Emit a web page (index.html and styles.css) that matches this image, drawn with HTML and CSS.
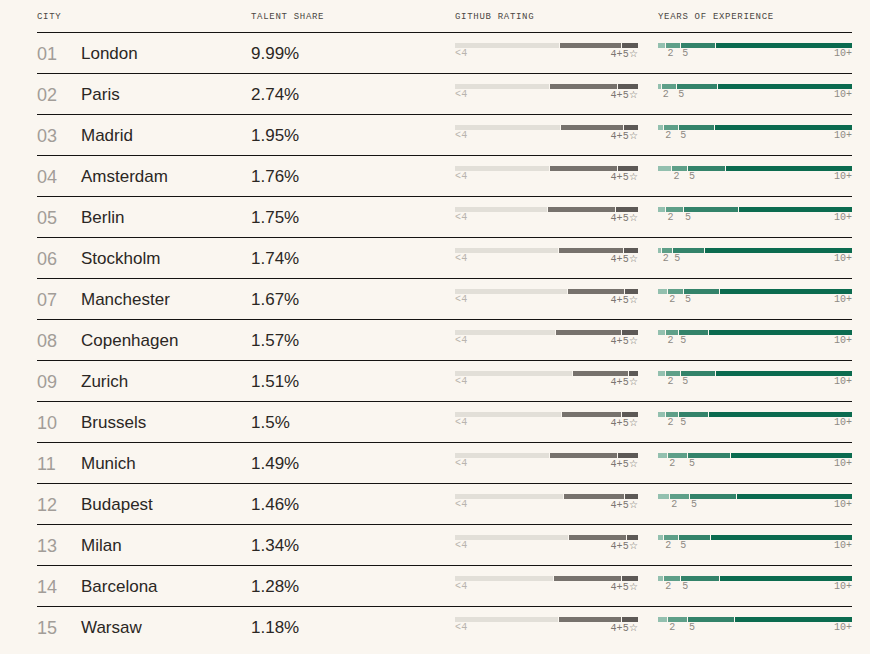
FILE: index.html
```html
<!DOCTYPE html>
<html lang="en">
<head>
<meta charset="utf-8">
<title>Talent by city</title>
<link rel="stylesheet" href="styles.css">
</head>
<body>
<div class="table">
  <div class="head">
    <div class="h-city">City</div>
    <div>Talent share</div>
    <div>Github rating</div>
    <div>Years of experience</div>
  </div>

  <div class="row">
    <div class="num">01</div><div class="name">London</div><div class="share">9.99%</div>
    <div class="gh"><div class="gbar"><span class="g1" style="flex-grow:57.7"></span><span class="g2" style="flex-grow:33.3"></span><span class="g3" style="flex-grow:9.0"></span></div><div class="glab"><span class="lo">&lt;4</span><span class="hi">4+5<span class="star">☆</span></span></div></div>
    <div class="yr"><div class="ybar"><div class="ys y1" style="flex-grow:3.9"><i></i></div><div class="ys y2" style="flex-grow:7.2"><i></i><b>2</b></div><div class="ys y3" style="flex-grow:17.5"><i></i><b>5</b></div><div class="ys y4" style="flex-grow:71.4"><i></i><b>10+</b></div></div></div>
  </div>

  <div class="row">
    <div class="num">02</div><div class="name">Paris</div><div class="share">2.74%</div>
    <div class="gh"><div class="gbar"><span class="g1" style="flex-grow:51.8"></span><span class="g2" style="flex-grow:37.0"></span><span class="g3" style="flex-grow:11.2"></span></div><div class="glab"><span class="lo">&lt;4</span><span class="hi">4+5<span class="star">☆</span></span></div></div>
    <div class="yr"><div class="ybar"><div class="ys y1" style="flex-grow:1.5"><i></i></div><div class="ys y2" style="flex-grow:7.5"><i></i><b>2</b></div><div class="ys y3" style="flex-grow:20.6"><i></i><b>5</b></div><div class="ys y4" style="flex-grow:70.4"><i></i><b>10+</b></div></div></div>
  </div>

  <div class="row">
    <div class="num">03</div><div class="name">Madrid</div><div class="share">1.95%</div>
    <div class="gh"><div class="gbar"><span class="g1" style="flex-grow:57.8"></span><span class="g2" style="flex-grow:34.3"></span><span class="g3" style="flex-grow:7.9"></span></div><div class="glab"><span class="lo">&lt;4</span><span class="hi">4+5<span class="star">☆</span></span></div></div>
    <div class="yr"><div class="ybar"><div class="ys y1" style="flex-grow:2.8"><i></i></div><div class="ys y2" style="flex-grow:7.3"><i></i><b>2</b></div><div class="ys y3" style="flex-grow:18.0"><i></i><b>5</b></div><div class="ys y4" style="flex-grow:71.9"><i></i><b>10+</b></div></div></div>
  </div>

  <div class="row">
    <div class="num">04</div><div class="name">Amsterdam</div><div class="share">1.76%</div>
    <div class="gh"><div class="gbar"><span class="g1" style="flex-grow:51.8"></span><span class="g2" style="flex-grow:37.0"></span><span class="g3" style="flex-grow:11.2"></span></div><div class="glab"><span class="lo">&lt;4</span><span class="hi">4+5<span class="star">☆</span></span></div></div>
    <div class="yr"><div class="ybar"><div class="ys y1" style="flex-grow:7.0"><i></i></div><div class="ys y2" style="flex-grow:7.7"><i></i><b>2</b></div><div class="ys y3" style="flex-grow:19.1"><i></i><b>5</b></div><div class="ys y4" style="flex-grow:66.2"><i></i><b>10+</b></div></div></div>
  </div>

  <div class="row">
    <div class="num">05</div><div class="name">Berlin</div><div class="share">1.75%</div>
    <div class="gh"><div class="gbar"><span class="g1" style="flex-grow:50.6"></span><span class="g2" style="flex-grow:37.1"></span><span class="g3" style="flex-grow:12.3"></span></div><div class="glab"><span class="lo">&lt;4</span><span class="hi">4+5<span class="star">☆</span></span></div></div>
    <div class="yr"><div class="ybar"><div class="ys y1" style="flex-grow:3.9"><i></i></div><div class="ys y2" style="flex-grow:8.7"><i></i><b>2</b></div><div class="ys y3" style="flex-grow:28.4"><i></i><b>5</b></div><div class="ys y4" style="flex-grow:59.0"><i></i><b>10+</b></div></div></div>
  </div>

  <div class="row">
    <div class="num">06</div><div class="name">Stockholm</div><div class="share">1.74%</div>
    <div class="gh"><div class="gbar"><span class="g1" style="flex-grow:56.7"></span><span class="g2" style="flex-grow:35.4"></span><span class="g3" style="flex-grow:7.9"></span></div><div class="glab"><span class="lo">&lt;4</span><span class="hi">4+5<span class="star">☆</span></span></div></div>
    <div class="yr"><div class="ybar"><div class="ys y1" style="flex-grow:1.5"><i></i></div><div class="ys y2" style="flex-grow:5.5"><i></i><b>2</b></div><div class="ys y3" style="flex-grow:15.9"><i></i><b>5</b></div><div class="ys y4" style="flex-grow:77.1"><i></i><b>10+</b></div></div></div>
  </div>

  <div class="row">
    <div class="num">07</div><div class="name">Manchester</div><div class="share">1.67%</div>
    <div class="gh"><div class="gbar"><span class="g1" style="flex-grow:61.6"></span><span class="g2" style="flex-grow:31.0"></span><span class="g3" style="flex-grow:7.4"></span></div><div class="glab"><span class="lo">&lt;4</span><span class="hi">4+5<span class="star">☆</span></span></div></div>
    <div class="yr"><div class="ybar"><div class="ys y1" style="flex-grow:4.9"><i></i></div><div class="ys y2" style="flex-grow:7.7"><i></i><b>2</b></div><div class="ys y3" style="flex-grow:18.1"><i></i><b>5</b></div><div class="ys y4" style="flex-grow:69.3"><i></i><b>10+</b></div></div></div>
  </div>

  <div class="row">
    <div class="num">08</div><div class="name">Copenhagen</div><div class="share">1.57%</div>
    <div class="gh"><div class="gbar"><span class="g1" style="flex-grow:55.0"></span><span class="g2" style="flex-grow:36.0"></span><span class="g3" style="flex-grow:9.0"></span></div><div class="glab"><span class="lo">&lt;4</span><span class="hi">4+5<span class="star">☆</span></span></div></div>
    <div class="yr"><div class="ybar"><div class="ys y1" style="flex-grow:3.9"><i></i></div><div class="ys y2" style="flex-grow:6.2"><i></i><b>2</b></div><div class="ys y3" style="flex-grow:14.9"><i></i><b>5</b></div><div class="ys y4" style="flex-grow:75.0"><i></i><b>10+</b></div></div></div>
  </div>

  <div class="row">
    <div class="num">09</div><div class="name">Zurich</div><div class="share">1.51%</div>
    <div class="gh"><div class="gbar"><span class="g1" style="flex-grow:64.9"></span><span class="g2" style="flex-grow:29.9"></span><span class="g3" style="flex-grow:5.2"></span></div><div class="glab"><span class="lo">&lt;4</span><span class="hi">4+5<span class="star">☆</span></span></div></div>
    <div class="yr"><div class="ybar"><div class="ys y1" style="flex-grow:3.9"><i></i></div><div class="ys y2" style="flex-grow:7.2"><i></i><b>2</b></div><div class="ys y3" style="flex-grow:17.5"><i></i><b>5</b></div><div class="ys y4" style="flex-grow:71.4"><i></i><b>10+</b></div></div></div>
  </div>

  <div class="row">
    <div class="num">10</div><div class="name">Brussels</div><div class="share">1.5%</div>
    <div class="gh"><div class="gbar"><span class="g1" style="flex-grow:58.8"></span><span class="g2" style="flex-grow:32.2"></span><span class="g3" style="flex-grow:9.0"></span></div><div class="glab"><span class="lo">&lt;4</span><span class="hi">4+5<span class="star">☆</span></span></div></div>
    <div class="yr"><div class="ybar"><div class="ys y1" style="flex-grow:3.9"><i></i></div><div class="ys y2" style="flex-grow:6.2"><i></i><b>2</b></div><div class="ys y3" style="flex-grow:14.9"><i></i><b>5</b></div><div class="ys y4" style="flex-grow:75.0"><i></i><b>10+</b></div></div></div>
  </div>

  <div class="row">
    <div class="num">11</div><div class="name">Munich</div><div class="share">1.49%</div>
    <div class="gh"><div class="gbar"><span class="g1" style="flex-grow:51.8"></span><span class="g2" style="flex-grow:37.0"></span><span class="g3" style="flex-grow:11.2"></span></div><div class="glab"><span class="lo">&lt;4</span><span class="hi">4+5<span class="star">☆</span></span></div></div>
    <div class="yr"><div class="ybar"><div class="ys y1" style="flex-grow:4.9"><i></i></div><div class="ys y2" style="flex-grow:9.8"><i></i><b>2</b></div><div class="ys y3" style="flex-grow:22.2"><i></i><b>5</b></div><div class="ys y4" style="flex-grow:63.1"><i></i><b>10+</b></div></div></div>
  </div>

  <div class="row">
    <div class="num">12</div><div class="name">Budapest</div><div class="share">1.46%</div>
    <div class="gh"><div class="gbar"><span class="g1" style="flex-grow:59.9"></span><span class="g2" style="flex-grow:32.7"></span><span class="g3" style="flex-grow:7.4"></span></div><div class="glab"><span class="lo">&lt;4</span><span class="hi">4+5<span class="star">☆</span></span></div></div>
    <div class="yr"><div class="ybar"><div class="ys y1" style="flex-grow:5.9"><i></i></div><div class="ys y2" style="flex-grow:9.8"><i></i><b>2</b></div><div class="ys y3" style="flex-grow:24.2"><i></i><b>5</b></div><div class="ys y4" style="flex-grow:60.1"><i></i><b>10+</b></div></div></div>
  </div>

  <div class="row">
    <div class="num">13</div><div class="name">Milan</div><div class="share">1.34%</div>
    <div class="gh"><div class="gbar"><span class="g1" style="flex-grow:62.7"></span><span class="g2" style="flex-grow:31.0"></span><span class="g3" style="flex-grow:6.3"></span></div><div class="glab"><span class="lo">&lt;4</span><span class="hi">4+5<span class="star">☆</span></span></div></div>
    <div class="yr"><div class="ybar"><div class="ys y1" style="flex-grow:2.8"><i></i></div><div class="ys y2" style="flex-grow:7.3"><i></i><b>2</b></div><div class="ys y3" style="flex-grow:15.9"><i></i><b>5</b></div><div class="ys y4" style="flex-grow:74.0"><i></i><b>10+</b></div></div></div>
  </div>

  <div class="row">
    <div class="num">14</div><div class="name">Barcelona</div><div class="share">1.28%</div>
    <div class="gh"><div class="gbar"><span class="g1" style="flex-grow:53.9"></span><span class="g2" style="flex-grow:37.1"></span><span class="g3" style="flex-grow:9.0"></span></div><div class="glab"><span class="lo">&lt;4</span><span class="hi">4+5<span class="star">☆</span></span></div></div>
    <div class="yr"><div class="ybar"><div class="ys y1" style="flex-grow:2.8"><i></i></div><div class="ys y2" style="flex-grow:8.3"><i></i><b>2</b></div><div class="ys y3" style="flex-grow:19.6"><i></i><b>5</b></div><div class="ys y4" style="flex-grow:69.3"><i></i><b>10+</b></div></div></div>
  </div>

  <div class="row">
    <div class="num">15</div><div class="name">Warsaw</div><div class="share">1.18%</div>
    <div class="gh"><div class="gbar"><span class="g1" style="flex-grow:56.7"></span><span class="g2" style="flex-grow:34.3"></span><span class="g3" style="flex-grow:9.0"></span></div><div class="glab"><span class="lo">&lt;4</span><span class="hi">4+5<span class="star">☆</span></span></div></div>
    <div class="yr"><div class="ybar"><div class="ys y1" style="flex-grow:4.9"><i></i></div><div class="ys y2" style="flex-grow:9.8"><i></i><b>2</b></div><div class="ys y3" style="flex-grow:24.2"><i></i><b>5</b></div><div class="ys y4" style="flex-grow:61.1"><i></i><b>10+</b></div></div></div>
  </div>
</div>
</body>
</html>
```

FILE: styles.css
```css
html, body {
  margin: 0;
  padding: 0;
  background: #faf6f0;
}

body {
  font-family: "Liberation Sans", Arial, sans-serif;
  color: #2b2724;
}

.table {
  margin-left: 37px;
  width: 815px;
}

.head,
.row {
  display: grid;
  grid-template-columns: 44px 170px 204px 203px 194px;
}

.head {
  height: 32px;
  box-sizing: border-box;
  padding-top: 2px;
  align-items: center;
  font-family: "Liberation Mono", "DejaVu Sans Mono", monospace;
  font-size: 9px;
  letter-spacing: 0.7px;
  text-transform: uppercase;
  color: #4a4643;
}

.h-city {
  grid-column: 1 / 3;
}

.row {
  border-top: 1px solid #151312;
  height: 41px;
  box-sizing: border-box;
  padding-top: 2px;
  align-items: center;
  font-size: 17px;
}

.num {
  color: #a29d98;
  font-size: 18px;
}

.name,
.share {
  color: #2b2724;
}

.gh,
.yr {
  align-self: start;
  padding-top: 8px;
  font-family: "Liberation Mono", "DejaVu Sans Mono", monospace;
  font-size: 10px;
  line-height: 12px;
  letter-spacing: 0.3px;
}

.gh {
  width: 183px;
}

.gbar {
  display: flex;
  gap: 1px;
  height: 5px;
}

.gbar span {
  flex: 1 1 0;
  min-width: 0;
}

.g1 { background: #e2dfd8; }
.g2 { background: #77726d; }
.g3 { background: #5d5956; }

.glab {
  display: flex;
  justify-content: space-between;
}

.lo { color: #b9b4ae; }
.hi { color: #7a7570; letter-spacing: 0.2px; }

.star {
  font-family: "DejaVu Sans", sans-serif;
  font-size: 10px;
  letter-spacing: 0;
  color: #6f6a65;
}

.ybar {
  display: flex;
  gap: 1px;
}

.ys {
  flex: 1 1 0;
  min-width: 0;
  display: flex;
  flex-direction: column;
  white-space: nowrap;
}

.ys i {
  display: block;
  height: 5px;
}

.ys b {
  font-weight: normal;
  color: #8e8a84;
  padding-left: 1px;
}

.y1 i { background: #93c0af; }
.y2 i { background: #5e9f88; }
.y3 i { background: #33836a; }
.y4 i { background: #0b6b4f; }

.y4 b {
  text-align: right;
  padding-left: 0;
  letter-spacing: 0;
}
```
